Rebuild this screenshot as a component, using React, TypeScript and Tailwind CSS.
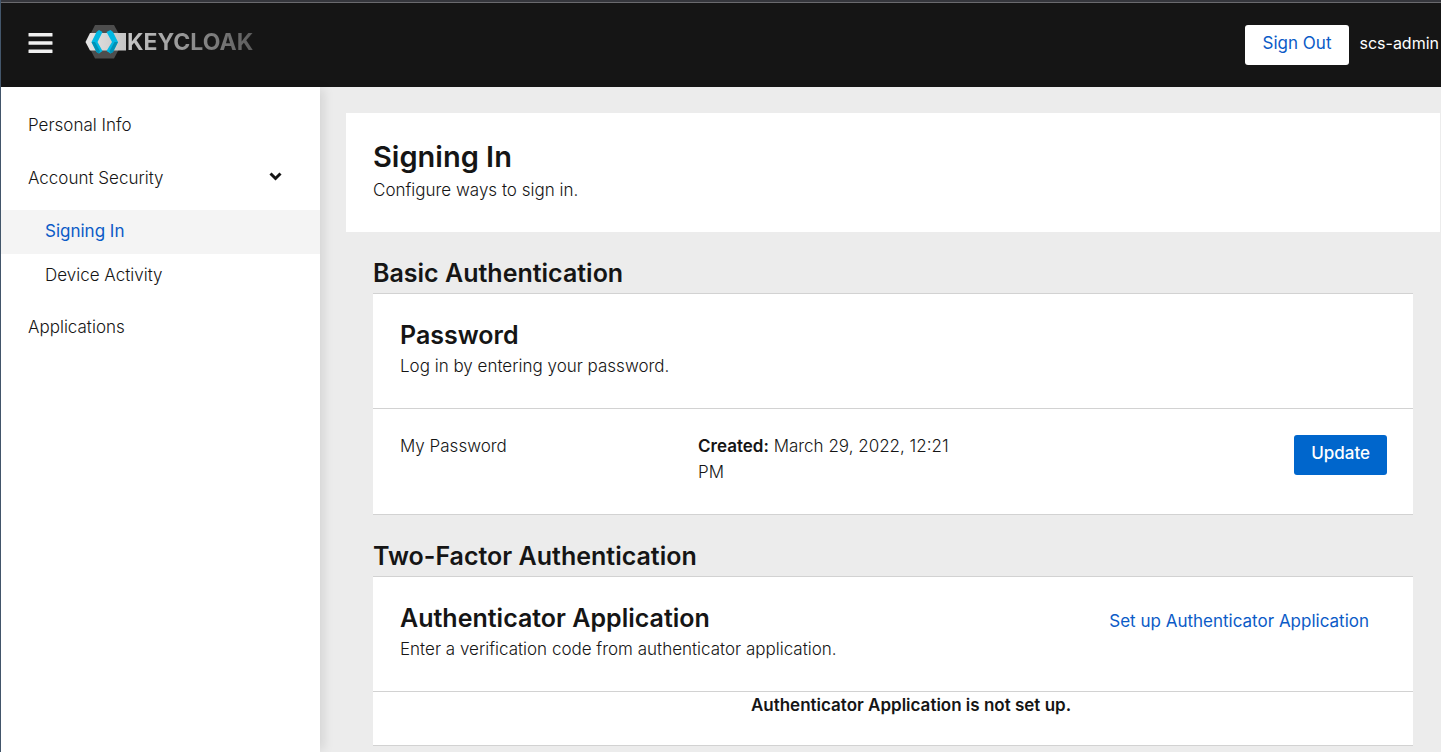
import type { ReactNode } from "react";

function KeycloakMark() {
  return (
    <svg width="42" height="34" viewBox="0 0 42 34" aria-hidden="true" className="shrink-0">
      <defs>
        <linearGradient id="band" x1="0" x2="1" y1="0" y2="0">
          <stop offset="0" stopColor="#e6e6e6" />
          <stop offset="1" stopColor="#c4c4c4" />
        </linearGradient>
      </defs>
      <path d="M10 0H29L38 16.500L29 33.5H10L1.500 17Z" fill="#4d4d4d" />
      <path d="M5 8H41V25.500H5L0.500 17Z" fill="url(#band)" />
      <path d="M11.500 7L14 5L17.500 7L12.500 17L17.500 26L14 28.500L11.500 27L6.500 17Z" fill="#00b8e3" />
      <path d="M6.500 17H10L15 26L14 28.500L11.500 27Z" fill="#0091b5" />
      <path d="M28 7L25.500 5L21.500 7L27 17L21.500 26L25.500 28.500L28 27L33 17Z" fill="#00b8e3" />
      <path d="M33 17H29.500L24.500 26L25.500 28.500L28 27Z" fill="#0091b5" />
    </svg>
  );
}

const navBase = "block pt-2 pb-[10px] leading-[26px]";

function Section({ title, children }: { title: string; children: ReactNode }) {
  return (
    <section className="mr-7 ml-[27px] mt-[21px]">
      <h2 className="text-[25px] leading-10 font-semibold">{title}</h2>
      <div className="border-y border-[#d2d2d2] bg-white">{children}</div>
    </section>
  );
}

function CardHeader({ title, text, children }: { title: string; text: string; children?: ReactNode }) {
  return (
    <div className="flex items-start justify-between border-b border-[#d2d2d2] px-[27px] pt-[23px] pb-[29px]">
      <div>
        <h3 className="text-[25px] leading-9 font-semibold">{title}</h3>
        <p>{text}</p>
      </div>
      {children}
    </div>
  );
}

export default function App() {
  return (
    <div className="flex min-h-screen flex-col border-l border-[#43566b] bg-[#ececec] font-['Inter','Noto_Sans',sans-serif] text-[17px] leading-[26px] font-light text-[#151515]">
      <div className="h-[3px] border-b border-[#6a6a6e] bg-[#35363c]" />
      <header className="flex h-[84px] items-center justify-between bg-[#151515] pr-[2px] pl-[27px]">
        <div className="flex items-center pb-1">
          <button type="button" aria-label="Toggle navigation" className="mr-8 text-[#f0f0f0]">
            <svg width="25" height="20" viewBox="0 0 25 20" fill="currentColor" aria-hidden="true">
              <rect x="0.500" y="0" width="24" height="3.500" rx="0.500" />
              <rect x="0.500" y="8.250" width="24" height="3.500" rx="0.500" />
              <rect x="0.500" y="16.500" width="24" height="3.500" rx="0.500" />
            </svg>
          </button>
          <a href="#" className="flex items-center pb-[2px]">
            <KeycloakMark />
            <span className="bg-linear-to-r from-[#c8c8c8] to-[#5c5c5c] bg-clip-text text-[23px] leading-[34px] font-bold text-transparent">
              KEYCLOAK
            </span>
          </a>
        </div>
        <div className="flex items-center gap-[10px] font-normal text-white">
          <button type="button" className="h-10 rounded-[3px] bg-white px-[18px] pb-1 text-[#0b5bc7]">
            Sign Out
          </button>
          <span className="pb-1 text-base">scs-admin</span>
        </div>
      </header>

      <div className="flex flex-1">
        <nav className="z-10 w-[319px] shrink-0 bg-white pt-[17px] shadow-[6px_0_10px_-2px_rgba(3,3,3,0.1)]">
          <ul className="flex flex-col gap-[9px]">
            <li>
              <a href="#personal" className={`${navBase} px-[27px]`}>Personal Info</a>
            </li>
            <li>
              <button type="button" aria-expanded="true" className="flex w-full items-center justify-between pt-2 pr-[38px] pb-[10px] pl-[27px] leading-[26px]">
                Account Security
                <svg width="13" height="12" viewBox="0 0 13 12" fill="none" stroke="#151515" strokeWidth="3" aria-hidden="true">
                  <path d="M1.500 1.500L6.500 6.500L11.500 1.500" />
                </svg>
              </button>
              <ul className="mt-[9px] -mb-px">
                <li>
                  <a href="#signing-in" aria-current="page" className={`${navBase} bg-[#f4f4f4] px-11 font-normal text-[#0b5bc7]`}>
                    Signing In
                  </a>
                </li>
                <li>
                  <a href="#devices" className={`${navBase} px-11`}>Device Activity</a>
                </li>
              </ul>
            </li>
            <li>
              <a href="#applications" className={`${navBase} px-[27px]`}>Applications</a>
            </li>
          </ul>
        </nav>

        <main className="min-w-0 flex-1 pt-[26px] pb-[6px] pl-[26px]">
          <div className="mr-px bg-white px-[27px] pt-6 pb-[29px]">
            <h1 className="text-[29px] leading-10 font-semibold">Signing In</h1>
            <p>Configure ways to sign in.</p>
          </div>

          <Section title="Basic Authentication">
            <CardHeader title="Password" text="Log in by entering your password." />
            <div className="flex items-start gap-[27px] pt-6 pr-[26px] pb-[29px] pl-[27px]">
              <div className="flex-1">My Password</div>
              <div className="flex-1">
                <strong className="font-semibold">Created:</strong> March 29, 2022, 12:21 PM
              </div>
              <div className="flex-1" />
              <button type="button" className="mt-[2px] h-10 rounded-[3px] bg-[#0066cc] px-[17px] pb-1 font-medium text-white">
                Update
              </button>
            </div>
          </Section>

          <Section title="Two-Factor Authentication">
            <CardHeader title="Authenticator Application" text="Enter a verification code from authenticator application.">
              <a href="#setup" className="mt-2 mr-[17px] font-normal text-[#0b5bc7]">
                Set up Authenticator Application
              </a>
            </CardHeader>
            <p className="pr-[27px] pb-[27px] pl-[63px] text-center font-semibold">
              Authenticator Application is not set up.
            </p>
          </Section>
        </main>
      </div>
    </div>
  );
}
